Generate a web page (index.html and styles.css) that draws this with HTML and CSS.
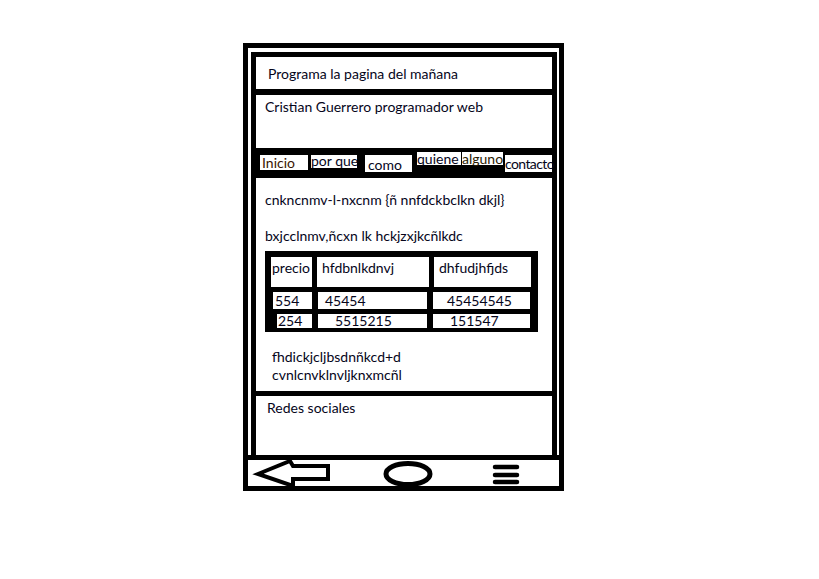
FILE: index.html
```html
<!DOCTYPE html>
<html lang="es">
<head>
    <meta charset="UTF-8">
    <meta name="viewport" content="width=device-width, initial-scale=1.0">
    <title>Programa la pagina del mañana</title>
    <link rel="stylesheet" href="styles.css">
</head>
<body>
    <div class="phone">
        <div class="screen">
            <header class="title">Programa la pagina del mañana</header>
            <div class="author">Cristian Guerrero programador web</div>
            <nav class="menu">
                <span class="item inicio">Inicio</span>
                <span class="item porque">por que</span>
                <span class="item como">como</span>
                <span class="item quienes">quiene</span>
                <span class="item algunos">alguno</span>
                <span class="item contacto">contacto</span>
            </nav>
            <main class="content">
                <p class="line first">cnkncnmv-l-nxcnm {ñ nnfdckbclkn dkjl}</p>
                <p class="line">bxjcclnmv,ñcxn lk hckjzxjkcñlkdc</p>
                <div class="table">
                    <div class="row head">
                        <span class="cell c1">precio</span>
                        <span class="cell c2">hfdbnlkdnvj</span>
                        <span class="cell c3">dhfudjhfjds</span>
                    </div>
                    <div class="row r1">
                        <span class="cell c1">554</span>
                        <span class="cell c2">45454</span>
                        <span class="cell c3">45454545</span>
                    </div>
                    <div class="row r2">
                        <span class="cell c1">254</span>
                        <span class="cell c2">5515215</span>
                        <span class="cell c3">151547</span>
                    </div>
                </div>
                <p class="notes">fhdickjcljbsdnñkcd+d<br>cvnlcnvklnvljknxmcñl</p>
            </main>
            <footer class="social">Redes sociales</footer>
        </div>
        <div class="navbar">
            <svg class="back" width="76" height="30" viewBox="0 0 76 30">
                <polygon points="2,16 34,3 37,8 72,8 72,21 37,21 37,28" fill="#fff" stroke="#000" stroke-width="4"/>
            </svg>
            <svg class="home" width="52" height="28" viewBox="0 0 52 28">
                <ellipse cx="26" cy="15" rx="22" ry="10.5" fill="#fff" stroke="#000" stroke-width="5"/>
            </svg>
            <svg class="recent" width="30" height="26" viewBox="0 0 30 26">
                <g stroke="#000" stroke-width="4.5" stroke-linecap="round">
                    <line x1="4" y1="7" x2="26" y2="7"/>
                    <line x1="4" y1="15" x2="26" y2="15"/>
                    <line x1="4" y1="22" x2="26" y2="22"/>
                </g>
            </svg>
        </div>
    </div>
</body>
</html>
```

FILE: styles.css
```css
body {
    margin: 0;
    background: #fff;
    font-family: Lato, "Open Sans", sans-serif;
    font-size: 14px;
    color: #05051a;
}
.phone {
    width: 321px;
    margin: 43px 0 0 243px;
    border: 5px solid #000;
    box-sizing: border-box;
}
.screen {
    margin: 4px 2px 0 3px;
    border: 5px solid #000;
    border-bottom: none;
}
.title {
    height: 32px;
    display: flex;
    align-items: center;
    padding-left: 12px;
    border-bottom: 6px solid #000;
}
.author {
    height: 53px;
    box-sizing: border-box;
    padding: 3px 9px;
    line-height: 18px;
}
.menu {
    height: 30px;
    box-sizing: border-box;
    background: #000;
    display: flex;
    align-items: flex-start;
    padding: 7px 0 0 4px;
}
.item {
    background: #fff;
    white-space: nowrap;
    line-height: 15px;
    flex-shrink: 0;
}
.inicio {
    width: 48px;
    height: 15px;
    padding-left: 2px;
    box-sizing: border-box;
    color: #3a1500;
}
.porque {
    width: 46px;
    height: 13px;
    margin-left: 3px;
    line-height: 12px;
}
.como {
    width: 47px;
    height: 17px;
    margin-left: 8px;
    padding: 2px 0 0 3px;
    box-sizing: border-box;
}
.quienes {
    width: 44px;
    height: 13px;
    margin: -3px 0 0 5px;
    line-height: 13px;
}
.algunos {
    width: 41px;
    height: 13px;
    margin: -3px 0 0 1px;
    line-height: 13px;
    color: #2a1a00;
}
.contacto {
    width: 47px;
    height: 17px;
    margin-left: 2px;
    padding-top: 1px;
    box-sizing: border-box;
    letter-spacing: -0.6px;
}
.content {
    display: block;
    height: 218px;
    box-sizing: border-box;
    padding: 13px 9px 0;
    border-bottom: 5px solid #000;
}
.line {
    margin: 0 0 6px;
    line-height: 18px;
}
.line.first {
    margin-bottom: 18px;
}
.table {
    width: 273px;
    background: #000;
    padding: 6px 0 5px;
    display: flex;
    flex-direction: column;
    gap: 5px;
}
.row {
    display: grid;
    column-gap: 6px;
}
.head {
    grid-template-columns: 41px 112px 97px;
    column-gap: 5px;
    padding-left: 6px;
    height: 30px;
}
.r1 {
    grid-template-columns: 39px 109px 97px;
    padding-left: 8px;
    height: 17px;
}
.r2 {
    grid-template-columns: 35px 109px 97px;
    padding-left: 12px;
    height: 13px;
}
.cell {
    background: #fff;
    white-space: nowrap;
}
.head .cell {
    padding-top: 3px;
    line-height: 16px;
}
.head .c1 { padding-left: 1px; }
.head .c2 { padding-left: 5px; }
.head .c3 { padding-left: 5px; }
.r1 .cell { line-height: 17px; }
.r1 .c1 { padding-left: 2px; }
.r1 .c2 { padding-left: 7px; }
.r1 .c3 { padding-left: 14px; }
.r2 .cell { line-height: 14px; }
.r2 .c1 { padding-left: 1px; }
.r2 .c2 { padding-left: 17px; }
.r2 .c3 { padding-left: 17px; }
.notes {
    margin: 16px 0 0 7px;
    line-height: 18px;
}
.social {
    height: 59px;
    box-sizing: border-box;
    padding: 3px 11px;
    line-height: 18px;
}
.navbar {
    height: 26px;
    border-top: 5px solid #000;
    display: flex;
    align-items: center;
}
.navbar svg {
    overflow: visible;
    flex-shrink: 0;
}
.back {
    margin-left: 8px;
}
.home {
    margin-left: 50px;
}
.recent {
    margin-left: 57px;
}
```
